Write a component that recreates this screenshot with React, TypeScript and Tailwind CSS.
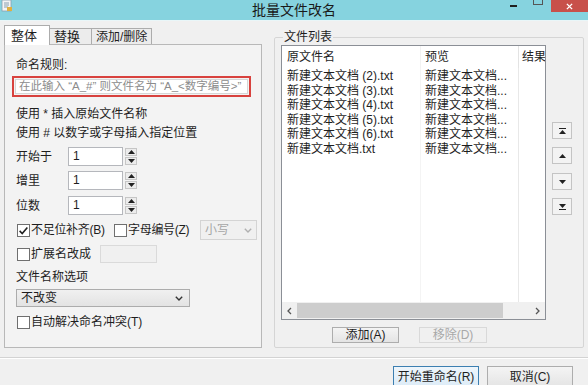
const FONT = "font-['Liberation_Sans','Noto_Sans_CJK_SC',sans-serif]";

function Check({ checked }: { checked?: boolean }) {
  return (
    <span className="w-[13px] h-[13px] border border-[#6f6f6f] bg-white flex items-center justify-center shrink-0">
      {checked && (
        <svg viewBox="0 0 12 12" className="w-[11px] h-[11px]">
          <path d="M1.8 6.4 L4.6 9.3 L10.2 2.6" stroke="#1f1f1f" strokeWidth="1.7" fill="none" />
        </svg>
      )}
    </span>
  );
}

function Tri({ up, gray }: { up?: boolean; gray?: boolean }) {
  return (
    <svg viewBox="0 0 7 4" className="w-[7px] h-[4px]">
      <path d={up ? "M0 4 L3.5 0 L7 4 Z" : "M0 0 L3.5 4 L7 0 Z"} fill={gray ? "#8a8a8a" : "#222"} />
    </svg>
  );
}

function SpinRow({ label }: { label: string }) {
  return (
    <div className="flex items-center h-[19px]">
      <span className="w-[52px] whitespace-nowrap">{label}</span>
      <div className="w-[55px] h-[19px] border border-[#b5b7bc] bg-white pl-[4px] leading-[17px]">1</div>
      <div className="ml-[2px] flex flex-col gap-[1px]">
        <div className="w-[12px] h-[8px] border border-[#c6c6c6] bg-[#ececec] flex items-center justify-center">
          <Tri up />
        </div>
        <div className="w-[12px] h-[8px] border border-[#c6c6c6] bg-[#ececec] flex items-center justify-center">
          <Tri />
        </div>
      </div>
    </div>
  );
}

function Chevron({ color }: { color: string }) {
  return (
    <svg viewBox="0 0 8 5" className="w-[8px] h-[5px]">
      <path d="M0.8 0.8 L4 4 L7.2 0.8" stroke={color} strokeWidth="1.4" fill="none" />
    </svg>
  );
}

function MoveBtn({ kind }: { kind: "top" | "up" | "down" | "bottom" }) {
  return (
    <div className="w-[20px] h-[17px] border border-[#c4c4c4] bg-[#f3f3f3] flex flex-col items-center justify-center gap-[1px]">
      {kind === "top" && <div className="w-[7px] h-[1px] bg-[#222]" />}
      <Tri up={kind === "top" || kind === "up"} />
      {kind === "bottom" && <div className="w-[7px] h-[1px] bg-[#222]" />}
    </div>
  );
}

const files = ["(2)", "(3)", "(4)", "(5)", "(6)", ""];

export default function App() {
  return (
    <div className={`w-[588px] h-[385px] overflow-hidden bg-[#f0f0f0] text-[12px] text-[#1e1e1e] ${FONT}`}>
      {/* title bar */}
      <div className="h-[21px] bg-[#86d3df] flex items-start border-b border-[#e9f6f8]">
        <div className="w-[88px] h-full pl-[1px]">
          <svg viewBox="0 0 12 12" className="w-[12px] h-[12px]">
            <rect x="1" y="0" width="9" height="11" fill="#f4f4f4" stroke="#8aa0b0" strokeWidth="0.8" />
            <path d="M3 3 H8 M3 5 H8 M3 7 H7" stroke="#6f8aa0" strokeWidth="0.8" />
            <rect x="6" y="7" width="5" height="4" fill="#e0b040" />
          </svg>
        </div>
        <div className="flex-1 text-center text-[14px] leading-[20px] text-[#1a1a1a]">批量文件改名</div>
        <div className="w-[88px] h-full flex items-start">
          <div className="ml-[10px] mt-[5px] w-[7px] h-[2px] bg-[#1f1f1f]" />
          <div className="ml-[16px] -mt-[4px] w-[10px] h-[9px] border border-[#555]" />
          <div className="ml-[8px] w-[37px] h-[12px] bg-[#c8504a] flex items-center justify-center">
            <svg viewBox="0 0 8 8" className="w-[7px] h-[7px]">
              <path d="M1 1 L7 7 M7 1 L1 7" stroke="#fff" strokeWidth="1.6" />
            </svg>
          </div>
        </div>
      </div>

      {/* body */}
      <div className="flex h-[327px] pl-[4px]">
        {/* left tabs */}
        <div className="w-[258px] flex flex-col pt-[4px]">
          <div className="flex items-end h-[20px]">
            <div className="w-[46px] h-[20px] bg-white border border-b-0 border-[#acacac] pl-[6px] leading-[19px] text-[13px] relative z-10">整体</div>
            <div className="w-[42px] h-[17px] bg-[#ececec] border border-b-0 border-l-0 border-[#acacac] pl-[4px] leading-[16px] text-[13px]">替换</div>
            <div className="w-[60px] h-[17px] bg-[#ececec] border border-b-0 border-l-0 border-[#acacac] pl-[4px] leading-[16px] text-[12px] whitespace-nowrap">添加/删除</div>
          </div>
          <div className="flex-1 border border-[#b8b8b8] -mt-[1px] bg-[#f3f3f3] pl-[11px] flex flex-col">
            <div className="mt-[13px] leading-[14px]">命名规则:</div>
            <div className="mt-[4px] -ml-[4px] w-[239px] h-[21px] border-2 border-[#d8423e] p-[1px]">
              <div className="h-full bg-white border border-[#d6d6d6] pl-[3px] text-[11.5px] leading-[13px] text-[#8c8c8c] whitespace-nowrap overflow-hidden">
                在此输入 “A_#” 则文件名为 “A_&lt;数字编号&gt;”
              </div>
            </div>
            <div className="mt-[10px] leading-[14px]">使用 * 插入原始文件名称</div>
            <div className="mt-[5px] leading-[14px]">使用 # 以数字或字母插入指定位置</div>
            <div className="mt-[7px]"><SpinRow label="开始于" /></div>
            <div className="mt-[5px]"><SpinRow label="增里" /></div>
            <div className="mt-[6px]"><SpinRow label="位数" /></div>
            <div className="mt-[5px] h-[20px] flex items-center">
              <div className="ml-[1px]"><Check checked /></div>
              <span className="ml-[1px] w-[71px] whitespace-nowrap tracking-[-0.3px]">不足位补齐(B)</span>
              <div className="ml-[12px]"><Check /></div>
              <span className="ml-[1px] w-[60px] whitespace-nowrap tracking-[-0.3px]">字母编号(Z)</span>
              <div className="ml-[12px] w-[57px] h-[20px] border border-[#d4d4d4] bg-[#f0f0f0] flex items-center justify-between px-[4px] text-[#a6a6a6] shrink-0">
                <span>小写</span>
                <Chevron color="#b0b0b0" />
              </div>
            </div>
            <div className="mt-[5px] h-[18px] flex items-center">
              <div className="ml-[1px]"><Check /></div>
              <span className="ml-[1px] w-[62px] whitespace-nowrap">扩展名改成</span>
              <div className="ml-[7px] w-[57px] h-[18px] border border-[#dadada] bg-[#f0f0f0]" />
            </div>
            <div className="mt-[7px] leading-[14px]">文件名称选项</div>
            <div className="mt-[5px] w-[174px] h-[18px] border border-[#acacac] bg-gradient-to-b from-[#f0f0f0] to-[#e3e3e3] flex items-center justify-between pl-[4px] pr-[6px]">
              <span className="leading-[16px]">不改变</span>
              <Chevron color="#333" />
            </div>
            <div className="mt-[8px] h-[14px] flex items-center">
              <div className="ml-[1px]"><Check /></div>
              <span className="ml-[1px] whitespace-nowrap">自动解决命名冲突(T)</span>
            </div>
          </div>
        </div>

        {/* right group */}
        <fieldset className="ml-[12px] mt-[9px] w-[310px] border border-[#d5d5d5] rounded-[2px] px-[6px] flex flex-col">
          <legend className="ml-[2px] px-[1px] leading-[14px]">文件列表</legend>
          <div className="flex">
            <div className="mt-[1px] w-[265px] h-[275px] border border-[#8b8f96] bg-white flex flex-col overflow-hidden">
              <div className="flex h-[22px] items-center">
                <div className="w-[138px] pl-[5px]">原文件名</div>
                <div className="w-[98px] pl-[4px] h-full flex items-center border-l border-[#f2f2f2]">预览</div>
                <div className="w-[27px] pl-[3px] h-full flex items-center border-l border-[#e3e3e3] whitespace-nowrap overflow-hidden">结果</div>
              </div>
              <div className="flex-1 flex">
                <div className="w-[138px] pl-[5px] pt-[1px]">
                  {files.map((f, i) => (
                    <div key={i} className="h-[14.6px] leading-[14.6px] whitespace-nowrap">
                      新建文本文档{f ? ` ${f}` : ""}.txt
                    </div>
                  ))}
                </div>
                <div className="w-[98px] pl-[4px] pt-[1px] border-l border-[#f4f4f4]">
                  {files.map((_, i) => (
                    <div key={i} className="h-[14.6px] leading-[14.6px] whitespace-nowrap">新建文本文档...</div>
                  ))}
                </div>
                <div className="flex-1 border-l border-[#e8e8e8]" />
              </div>
              <div className="h-[17px] bg-[#f0f0f0] flex items-center">
                <div className="w-[15px] flex justify-center">
                  <svg viewBox="0 0 5 8" className="w-[5px] h-[8px]"><path d="M4 1 L1 4 L4 7" stroke="#555" strokeWidth="1.3" fill="none" /></svg>
                </div>
                <div className="w-[206px] h-[15px] bg-[#cdcdcd]" />
                <div className="flex-1" />
                <div className="w-[15px] flex justify-center">
                  <svg viewBox="0 0 5 8" className="w-[5px] h-[8px]"><path d="M1 1 L4 4 L1 7" stroke="#555" strokeWidth="1.3" fill="none" /></svg>
                </div>
              </div>
            </div>
            <div className="ml-[6px] flex flex-col">
              <div className="mt-[78px]"><MoveBtn kind="top" /></div>
              <div className="mt-[8px]"><MoveBtn kind="up" /></div>
              <div className="mt-[9px]"><MoveBtn kind="down" /></div>
              <div className="mt-[8px]"><MoveBtn kind="bottom" /></div>
            </div>
          </div>
          <div className="flex mt-[7px] pl-[51px] gap-[20px]">
            <div className="w-[67px] h-[16px] border border-[#adadad] bg-gradient-to-b from-[#f4f4f4] to-[#e4e4e4] text-center leading-[14px]">添加(A)</div>
            <div className="w-[68px] h-[16px] border border-[#d9d9d9] bg-[#f0f0f0] text-center leading-[14px] text-[#a8a8a8]">移除(D)</div>
          </div>
        </fieldset>
      </div>

      {/* separator + bottom buttons */}
      <div className="mt-[9px] border-t border-[#d3d3d3] border-b border-b-white" />
      <div className="mt-[7px] flex justify-end pr-[15px] gap-[8px]">
        <div className="w-[86px] h-[22px] border border-[#3c7fb1] bg-gradient-to-b from-[#eef5fb] to-[#dcebf7] text-center leading-[20px]">开始重命名(R)</div>
        <div className="w-[86px] h-[22px] border border-[#adadad] bg-gradient-to-b from-[#f4f4f4] to-[#e4e4e4] text-center leading-[20px]">取消(C)</div>
      </div>
    </div>
  );
}
